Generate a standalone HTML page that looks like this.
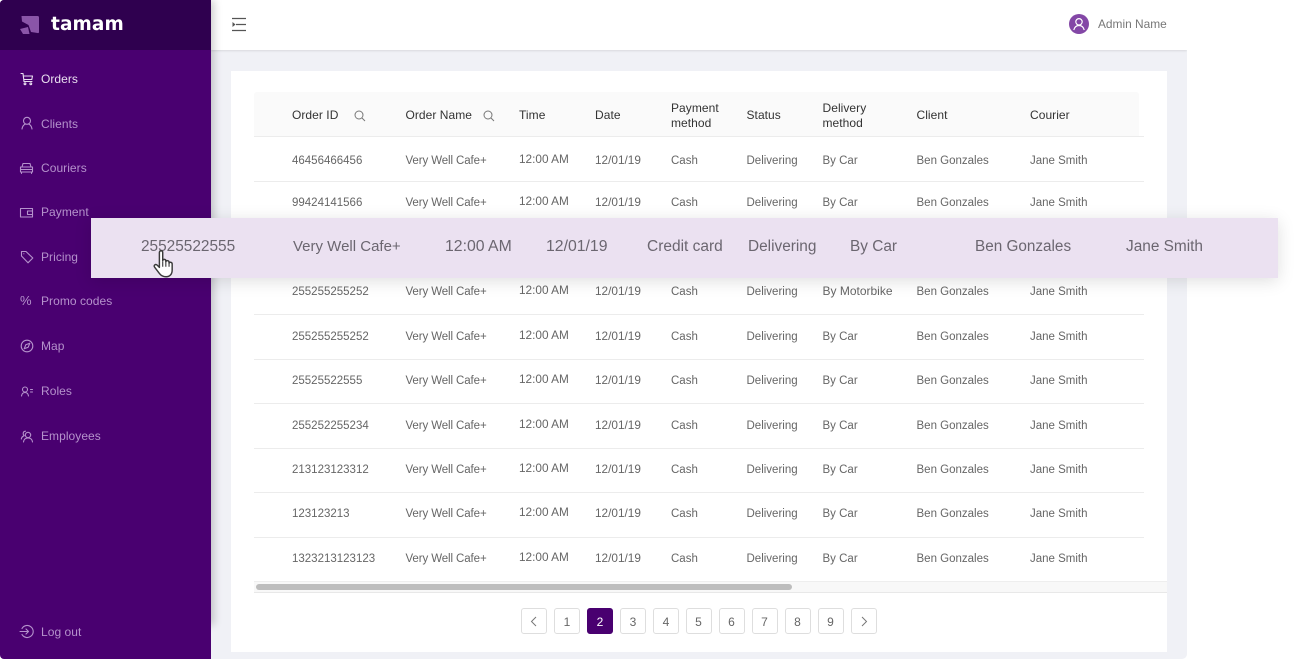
<!DOCTYPE html>
<html><head><meta charset="utf-8">
<style>
html,body{margin:0;padding:0;background:#fff}
#p{position:relative;width:1297px;height:659px;overflow:hidden;background:#fff;font-family:"Liberation Sans",sans-serif}
#p div,#p span.a,#p svg{position:absolute}
.t{position:absolute;white-space:nowrap;transform:translateY(-50%);font-size:11.5px;color:#666;line-height:16px;margin-top:1px}
.t[style*="left:519px"],.t[style*="left:595px"]{font-size:11.8px;margin-top:0}
.t[style*="left:405px"]{letter-spacing:-.1px}
.t[style*="left:405px"],.t[style*="left:746px"],.t[style*="left:822px"],.t[style*="left:916px"]{margin-left:.5px}
#p .h{color:#333;font-size:12px;letter-spacing:.05px;margin-top:0}
.n{position:absolute;white-space:nowrap;transform:translateY(-50%);left:41px;font-size:12px;letter-spacing:.05px;color:#b592cc;line-height:16px}
.l{left:254px;width:890px;height:1px;background:#ececec}
.b{top:608px;width:24px;height:24px;border:1px solid #dedede;border-radius:3px;background:#fff;text-align:center;line-height:26px;font-size:12px;color:#666}
.i{fill:none;stroke:#b592cc;stroke-width:1.1;stroke-linecap:round;stroke-linejoin:round}
.o{position:absolute;white-space:nowrap;transform:translateY(-50%);font-size:15.4px;color:#6b6670;line-height:20px;top:246.500px}
</style></head><body><div id="p">

<div style="left:211px;top:0;width:976px;height:659px;background:#f0f1f6;border-bottom-right-radius:5px"></div>
<div style="left:211px;top:0;width:976px;height:50px;background:#fff;box-shadow:0 1px 2px rgba(0,0,0,.1);clip-path:inset(0 0 -5px 0)"></div>
<div style="left:231px;top:71px;width:936px;height:581px;background:#fff"></div>

<svg style="left:231px;top:17px" width="16" height="15" viewBox="0 0 16 15" fill="none" stroke="#555" stroke-width="1.3"><path d="M1 1.500H15M5 7.500H15M1 13.500H15"/><path d="M1.500 5V10L4.500 7.500Z" fill="#555" stroke="none"/></svg>
<svg style="left:1069px;top:14px" width="20" height="20" viewBox="0 0 20 20"><circle cx="10" cy="10" r="10" fill="#8347a6"/><circle cx="10" cy="7.800" r="3.200" fill="none" stroke="#fff" stroke-width="1.200"/><path d="M4.800 16C5.600 12.900 7.500 11.500 10 11.500S14.400 12.900 15.200 16" fill="none" stroke="#fff" stroke-width="1.200"/></svg>
<span class="t" style="left:1098px;top:24px;color:#777;font-size:11.900px;margin-top:0">Admin Name</span>

<div style="left:254px;top:92px;width:885px;height:44px;background:#fafafa;border-radius:3px 3px 0 0"></div>
<div class="l" style="top:136px"></div><div class="l" style="top:181px"></div><div class="l" style="top:225px"></div><div class="l" style="top:314px"></div><div class="l" style="top:359px"></div><div class="l" style="top:403px"></div><div class="l" style="top:448px"></div><div class="l" style="top:492px"></div><div class="l" style="top:537px"></div>

<span class="t h" style="left:292px;top:115px">Order ID</span>
<svg style="left:354px;top:110px" width="12" height="12" viewBox="0 0 12 12" fill="none" stroke="#777" stroke-width="1"><circle cx="5" cy="5" r="4"/><path d="M8 8L11 11"/></svg>
<span class="t h" style="left:405px;top:115px">Order Name</span>
<svg style="left:483px;top:110px" width="12" height="12" viewBox="0 0 12 12" fill="none" stroke="#777" stroke-width="1"><circle cx="5" cy="5" r="4"/><path d="M8 8L11 11"/></svg>
<span class="t h" style="left:519px;top:115px">Time</span>
<span class="t h" style="left:595px;top:115px">Date</span>
<span class="t h" style="left:671px;top:108px">Payment</span><span class="t h" style="left:671px;top:123px">method</span>
<span class="t h" style="left:746px;top:115px">Status</span>
<span class="t h" style="left:822px;top:108px">Delivery</span><span class="t h" style="left:822px;top:123px">method</span>
<span class="t h" style="left:916px;top:115px">Client</span>
<span class="t h" style="left:1030px;top:115px">Courier</span>

<span class="t" style="left:292px;top:160px">46456466456</span><span class="t" style="left:405px;top:160px">Very Well Cafe+</span><span class="t" style="left:519px;top:159px">12:00 AM</span><span class="t" style="left:595px;top:160px">12/01/19</span><span class="t" style="left:671px;top:160px">Cash</span><span class="t" style="left:746px;top:160px">Delivering</span><span class="t" style="left:822px;top:160px">By Car</span><span class="t" style="left:916px;top:160px">Ben Gonzales</span><span class="t" style="left:1030px;top:160px">Jane Smith</span>

<span class="t" style="left:292px;top:202px">99424141566</span><span class="t" style="left:405px;top:202px">Very Well Cafe+</span><span class="t" style="left:519px;top:201px">12:00 AM</span><span class="t" style="left:595px;top:202px">12/01/19</span><span class="t" style="left:671px;top:202px">Cash</span><span class="t" style="left:746px;top:202px">Delivering</span><span class="t" style="left:822px;top:202px">By Car</span><span class="t" style="left:916px;top:202px">Ben Gonzales</span><span class="t" style="left:1030px;top:202px">Jane Smith</span>

<span class="t" style="left:292px;top:291px">255255255252</span><span class="t" style="left:405px;top:291px">Very Well Cafe+</span><span class="t" style="left:519px;top:290px">12:00 AM</span><span class="t" style="left:595px;top:291px">12/01/19</span><span class="t" style="left:671px;top:291px">Cash</span><span class="t" style="left:746px;top:291px">Delivering</span><span class="t" style="left:822px;top:291px;font-size:12px;margin-top:0">By Motorbike</span><span class="t" style="left:916px;top:291px">Ben Gonzales</span><span class="t" style="left:1030px;top:291px">Jane Smith</span>

<span class="t" style="left:292px;top:336px">255255255252</span><span class="t" style="left:405px;top:336px">Very Well Cafe+</span><span class="t" style="left:519px;top:335px">12:00 AM</span><span class="t" style="left:595px;top:336px">12/01/19</span><span class="t" style="left:671px;top:336px">Cash</span><span class="t" style="left:746px;top:336px">Delivering</span><span class="t" style="left:822px;top:336px">By Car</span><span class="t" style="left:916px;top:336px">Ben Gonzales</span><span class="t" style="left:1030px;top:336px">Jane Smith</span>

<span class="t" style="left:292px;top:380px">25525522555</span><span class="t" style="left:405px;top:380px">Very Well Cafe+</span><span class="t" style="left:519px;top:379px">12:00 AM</span><span class="t" style="left:595px;top:380px">12/01/19</span><span class="t" style="left:671px;top:380px">Cash</span><span class="t" style="left:746px;top:380px">Delivering</span><span class="t" style="left:822px;top:380px">By Car</span><span class="t" style="left:916px;top:380px">Ben Gonzales</span><span class="t" style="left:1030px;top:380px">Jane Smith</span>

<span class="t" style="left:292px;top:425px">255252255234</span><span class="t" style="left:405px;top:425px">Very Well Cafe+</span><span class="t" style="left:519px;top:424px">12:00 AM</span><span class="t" style="left:595px;top:425px">12/01/19</span><span class="t" style="left:671px;top:425px">Cash</span><span class="t" style="left:746px;top:425px">Delivering</span><span class="t" style="left:822px;top:425px">By Car</span><span class="t" style="left:916px;top:425px">Ben Gonzales</span><span class="t" style="left:1030px;top:425px">Jane Smith</span>

<span class="t" style="left:292px;top:469px">213123123312</span><span class="t" style="left:405px;top:469px">Very Well Cafe+</span><span class="t" style="left:519px;top:468px">12:00 AM</span><span class="t" style="left:595px;top:469px">12/01/19</span><span class="t" style="left:671px;top:469px">Cash</span><span class="t" style="left:746px;top:469px">Delivering</span><span class="t" style="left:822px;top:469px">By Car</span><span class="t" style="left:916px;top:469px">Ben Gonzales</span><span class="t" style="left:1030px;top:469px">Jane Smith</span>

<span class="t" style="left:292px;top:513px">123123213</span><span class="t" style="left:405px;top:513px">Very Well Cafe+</span><span class="t" style="left:519px;top:512px">12:00 AM</span><span class="t" style="left:595px;top:513px">12/01/19</span><span class="t" style="left:671px;top:513px">Cash</span><span class="t" style="left:746px;top:513px">Delivering</span><span class="t" style="left:822px;top:513px">By Car</span><span class="t" style="left:916px;top:513px">Ben Gonzales</span><span class="t" style="left:1030px;top:513px">Jane Smith</span>

<span class="t" style="left:292px;top:558px">1323213123123</span><span class="t" style="left:405px;top:558px">Very Well Cafe+</span><span class="t" style="left:519px;top:557px">12:00 AM</span><span class="t" style="left:595px;top:558px">12/01/19</span><span class="t" style="left:671px;top:558px">Cash</span><span class="t" style="left:746px;top:558px">Delivering</span><span class="t" style="left:822px;top:558px">By Car</span><span class="t" style="left:916px;top:558px">Ben Gonzales</span><span class="t" style="left:1030px;top:558px">Jane Smith</span>

<div style="left:254px;top:581px;width:913px;height:12px;background:#f8f8f8;border-top:1px solid #eee;border-bottom:1px solid #e8e8e8;box-sizing:border-box"></div>
<div style="left:256px;top:584px;width:536px;height:6px;background:#bdbdbd;border-radius:3px"></div>

<div class="b" style="left:521px"><svg style="left:8px;top:7px" width="8" height="11" viewBox="0 0 8 11" fill="none" stroke="#777"><path d="M6 1L1.500 5.500L6 10"/></svg></div>
<div class="b" style="left:554px">1</div>
<div class="b" style="left:587px;background:#490070;border-color:#490070;color:#fff">2</div>
<div class="b" style="left:620px">3</div>
<div class="b" style="left:653px">4</div>
<div class="b" style="left:685.500px">5</div>
<div class="b" style="left:718.500px">6</div>
<div class="b" style="left:751.500px">7</div>
<div class="b" style="left:784.500px">8</div>
<div class="b" style="left:817.500px">9</div>
<div class="b" style="left:850.500px"><svg style="left:8.500px;top:7px" width="8" height="11" viewBox="0 0 8 11" fill="none" stroke="#777"><path d="M2 1L6.500 5.500L2 10"/></svg></div>

<div style="left:0;top:0;width:211px;height:625px;box-shadow:3px 0 8px rgba(0,0,0,.2)"></div>
<div style="left:0;top:0;width:211px;height:659px;background:#490070;border-radius:4px 0 0 4px"></div>
<div style="left:0;top:0;width:211px;height:50px;background:#2f004f;border-top-left-radius:4px"></div>
<svg style="left:20px;top:15px" width="20" height="20" viewBox="0 0 20 20"><path d="M1.500 1H17.500Q19 1 19 2.500V17Q19 18.500 17.500 18L11 17L8.500 10L2 6.500Z" fill="#8a55a8"/><path d="M0 14L8 12L9.500 19L3 19Z" fill="#8a55a8"/></svg>
<span class="a" style="left:51px;top:13.500px;font:bold 18.500px/22px 'DejaVu Sans',sans-serif;color:#fff;white-space:nowrap;letter-spacing:.1px">tamam</span>

<svg style="left:20px;top:72px" width="14" height="14" viewBox="0 0 14 14" class="i"><path style="stroke:#e8dcef" d="M1 1.500H3L4 9.500H12M3.300 4H12.500L11.800 7.500H3.800"/><circle style="stroke:#e8dcef" cx="5" cy="11.800" r=".9"/><circle style="stroke:#e8dcef" cx="10.800" cy="11.800" r=".9"/></svg>
<span class="n" style="top:79px;color:#eadff0">Orders</span>

<svg style="left:20px;top:116px" width="14" height="14" viewBox="0 0 14 14" class="i"><circle cx="7" cy="4.800" r="3.500"/><path d="M2 13C2.500 10.300 3.600 8.800 5 8.300M12 13C11.500 10.300 10.400 8.800 9 8.300"/></svg>
<span class="n" style="top:123.500px">Clients</span>

<svg style="left:19px;top:161px" width="15" height="14" viewBox="0 0 15 14" class="i"><path d="M3 6L4 2.500H11L12 6M1.500 6H13.500V11H1.500ZM1.500 8.500H13.500M2.500 11V12.500M12.500 11V12.500"/></svg>
<span class="n" style="top:168px">Couriers</span>

<svg style="left:19px;top:206px" width="15" height="13" viewBox="0 0 15 13" class="i"><path d="M1.500 2.500H13.500V11H1.500ZM13.500 5H8.500V8.500H13.500"/></svg>
<span class="n" style="top:212px">Payment</span>

<svg style="left:20px;top:250px" width="14" height="14" viewBox="0 0 14 14" class="i"><path d="M1.500 1.500H6L12.800 8L8 12.800L1.500 6ZM3.800 3.800H3.900"/></svg>
<span class="n" style="top:257px">Pricing</span>

<span class="n" style="left:20px;top:301px;font-size:13px;letter-spacing:0">%</span>
<span class="n" style="top:301px">Promo codes</span>

<svg style="left:20px;top:339px" width="14" height="14" viewBox="0 0 14 14" class="i"><circle cx="7" cy="7" r="5.800"/><path d="M9.800 4.200L8.200 8.200L4.200 9.800L5.800 5.800Z"/></svg>
<span class="n" style="top:346px">Map</span>

<svg style="left:20px;top:385px" width="14" height="13" viewBox="0 0 14 13" class="i"><circle cx="5" cy="4.500" r="2.500"/><path d="M1.500 11C1.800 8.800 3 7.500 5 7.500S8.200 8.800 8.500 11M10.500 4.500H12.500M10.500 7H12.500"/></svg>
<span class="n" style="top:391px">Roles</span>

<svg style="left:20px;top:429px" width="14" height="14" viewBox="0 0 14 14" class="i"><circle cx="8" cy="6" r="2.700"/><path d="M3.500 13C3.800 10.300 5.500 9 8 9S12.200 10.300 12.500 13M5.500 2.200C4 2.200 3.200 3.300 3.200 4.700C3.200 5.500 3.600 6.200 4.200 6.700C2.500 7.300 1.600 8.400 1.300 10"/></svg>
<span class="n" style="top:436px">Employees</span>

<svg style="left:19px;top:624px" width="15" height="15" viewBox="0 0 15 15" class="i"><path d="M3 4.500A6 6 0 1 1 3 10.500M1 7.500H9.500M7 5L9.500 7.500L7 10"/></svg>
<span class="n" style="top:632px">Log out</span>

<div style="left:91px;top:218px;width:1187px;height:60px;background:#ebe1f1;box-shadow:0 3px 16px rgba(0,0,0,.13)"></div>
<span class="o" style="left:141px">25525522555</span>
<span class="o" style="left:293px;font-size:15px">Very Well Cafe+</span>
<span class="o" style="left:445px;font-size:15.800px">12:00 AM</span>
<span class="o" style="left:546px;font-size:15.800px">12/01/19</span>
<span class="o" style="left:647px;font-size:15.500px">Credit card</span>
<span class="o" style="left:748px">Delivering</span>
<span class="o" style="left:850px">By Car</span>
<span class="o" style="left:975px;font-size:15.300px">Ben Gonzales</span>
<span class="o" style="left:1126px">Jane Smith</span>

<svg style="left:152px;top:249px" width="27" height="30" viewBox="0 0 24 27"><path d="M6.500 3.200C6.500 1 9.500 1 9.500 3.200V10.500C9.800 8.800 12.300 9 12.300 10.800V11.500C12.700 10 15.200 10.200 15.200 12V12.800C15.700 11.400 18 11.700 18 13.500V19C18 22.500 16 25 12.500 25C9.500 25 8 24 6.500 22L2.300 16.500C1 14.800 3 13.200 4.500 14.500L6.500 16.500Z" fill="#fff" stroke="#3a3a3a" stroke-width="1.300" stroke-linejoin="round"/><path d="M9.500 11V16M12.300 11.500V16M15.200 12.500V16" fill="none" stroke="#3a3a3a" stroke-width="1"/></svg>

</div></body></html>
